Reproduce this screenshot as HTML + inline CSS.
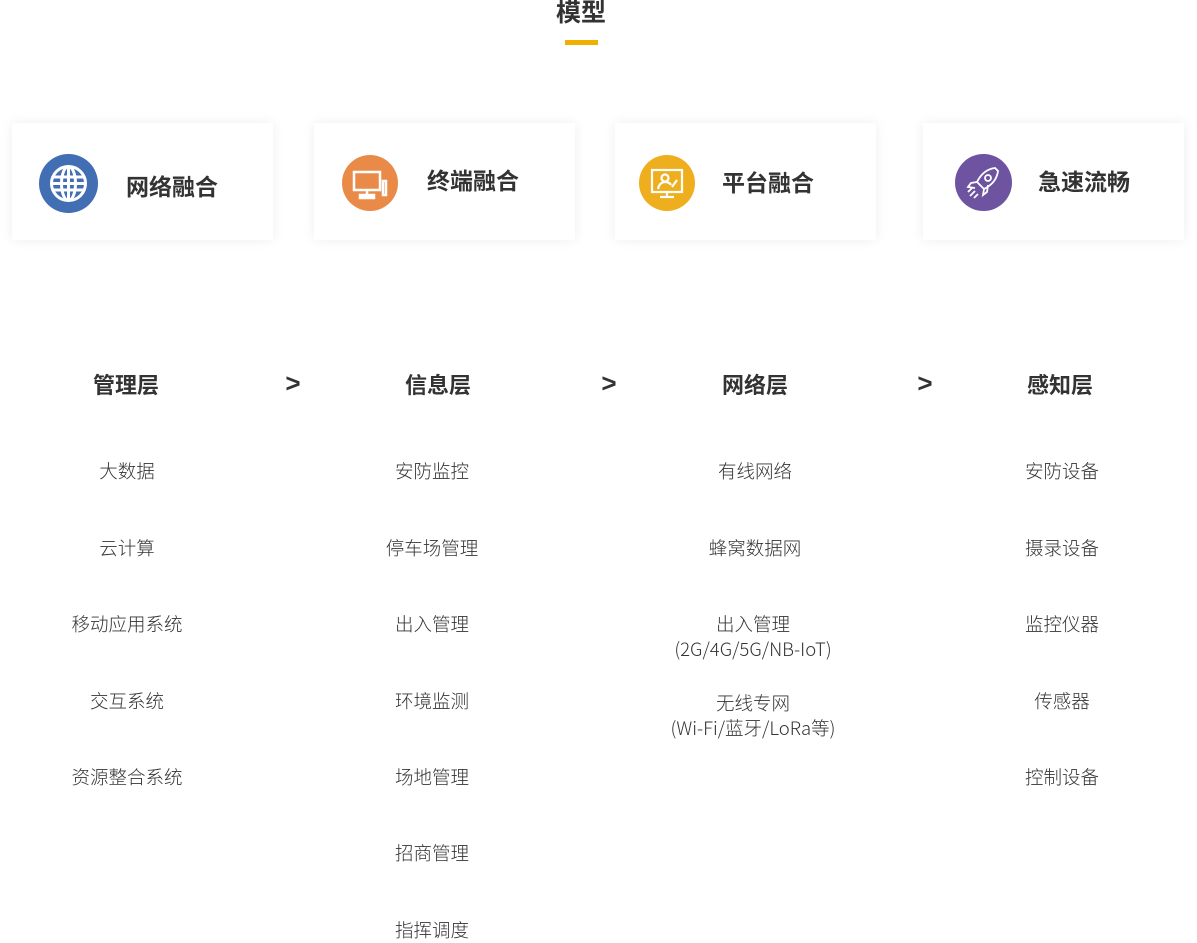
<!DOCTYPE html>
<html><head><meta charset="utf-8"><style>
body{margin:0;width:1197px;height:939px;background:#fff;position:relative;overflow:hidden;font-family:"Liberation Sans","Noto Sans CJK SC",sans-serif;color:#333}
.a{position:absolute;white-space:nowrap}
.c{transform:translateX(-50%);text-align:center}
.card{position:absolute;top:123px;width:261px;height:117px;background:#fff;box-shadow:0 0 12px rgba(0,0,0,.07)}
.ic{position:absolute;border-radius:50%;width:58px;height:58px;top:154px}
.ic svg{position:absolute;left:0;top:0}
.ct{position:absolute;top:164px;font-size:23px;font-weight:bold;color:#333}
.h{font-size:22px;font-weight:bold;top:368px;color:#333}
.g{font-size:26px;font-weight:bold;top:368px;color:#333}
.i{font-size:18.5px;color:#333;line-height:25px;font-family:"Noto Sans CJK SC",sans-serif;font-weight:300}
</style></head><body>
<div class="a c" style="left:581px;top:-7px;font-size:25px;font-weight:bold">模型</div>
<div class="a" style="left:565px;top:40px;width:33px;height:5px;background:#f0b000"></div>

<div class="card" style="left:12px"></div>
<div class="card" style="left:314px"></div>
<div class="card" style="left:615px"></div>
<div class="card" style="left:923px"></div>

<div class="ic" style="left:39px;background:#426eb4;width:59px;height:59px">
<svg width="59" height="59" viewBox="0 0 59 59" fill="none" stroke="#fff" stroke-width="3"><circle cx="29.5" cy="29.5" r="17"/><ellipse cx="29.5" cy="29.5" rx="7" ry="17"/><line x1="29.5" y1="12" x2="29.5" y2="47"/><line x1="13" y1="23" x2="46" y2="23"/><line x1="13" y1="36" x2="46" y2="36"/><line x1="12" y1="29.5" x2="47" y2="29.5"/></svg></div>
<div class="ct" style="left:126px;top:168px">网络融合</div>

<div class="ic" style="left:342px;background:#ea8a48;width:56px;height:56px;top:155px">
<svg width="56" height="56" viewBox="0 0 56 56" fill="none" stroke="#fff" stroke-width="2.5"><rect x="12" y="17" width="26" height="18"/><line x1="25" y1="35" x2="25" y2="40"/><rect x="18" y="40" width="14" height="3" fill="#fff"/><rect x="41" y="26" width="3" height="14"/></svg></div>
<div class="ct" style="left:427px;top:162px">终端融合</div>

<div class="ic" style="left:639px;background:#efae1e;width:56px;height:56px;top:155px">
<svg width="56" height="56" viewBox="0 0 56 56" fill="none" stroke="#fff" stroke-width="2.2"><rect x="13" y="15" width="30" height="22"/><circle cx="26" cy="23" r="3.5"/><path d="M19 34c1-5 4-7 7-7s5 1 6 3"/><path d="M33 32l5-7"/><line x1="28" y1="37" x2="28" y2="42"/><line x1="21" y1="42" x2="35" y2="42"/></svg></div>
<div class="ct" style="left:722px;top:164px">平台融合</div>

<div class="ic" style="left:955px;background:#6d53a0;width:57px;height:57px">
<svg width="57" height="57" viewBox="0 0 57 57" fill="none" stroke="#fff" stroke-width="1.8"><path d="M40 14c-8 1-14 6-18 14l7 7c8-4 13-10 14-18z"/><circle cx="33" cy="24" r="3"/><path d="M22 28l-6 1-3 4 7 1"/><path d="M29 35l-1 6 4-3 1-7"/><path d="M20 37l-5 5M23 40l-4 4M17 34l-4 4"/></svg></div>
<div class="ct" style="left:1038px;top:163px">急速流畅</div>

<div class="a c h" style="left:126px">管理层</div>
<div class="a c h" style="left:438px">信息层</div>
<div class="a c h" style="left:755px">网络层</div>
<div class="a c h" style="left:1060px">感知层</div>
<div class="a c g" style="left:293px">&gt;</div>
<div class="a c g" style="left:609px">&gt;</div>
<div class="a c g" style="left:925px">&gt;</div>

<div class="a c i" style="left:127px;top:459px">大数据</div>
<div class="a c i" style="left:127px;top:536px">云计算</div>
<div class="a c i" style="left:127px;top:612px">移动应用系统</div>
<div class="a c i" style="left:127px;top:689px">交互系统</div>
<div class="a c i" style="left:127px;top:765px">资源整合系统</div>

<div class="a c i" style="left:432px;top:459px">安防监控</div>
<div class="a c i" style="left:432px;top:536px">停车场管理</div>
<div class="a c i" style="left:432px;top:612px">出入管理</div>
<div class="a c i" style="left:432px;top:689px">环境监测</div>
<div class="a c i" style="left:432px;top:765px">场地管理</div>
<div class="a c i" style="left:432px;top:841px">招商管理</div>
<div class="a c i" style="left:432px;top:918px">指挥调度</div>

<div class="a c i" style="left:755px;top:459px">有线网络</div>
<div class="a c i" style="left:755px;top:536px">蜂窝数据网</div>
<div class="a c i" style="left:753px;top:612px">出入管理<br>(2G/4G/5G/NB-IoT)</div>
<div class="a c i" style="left:753px;top:691px">无线专网<br>(Wi-Fi/蓝牙/LoRa等)</div>

<div class="a c i" style="left:1062px;top:459px">安防设备</div>
<div class="a c i" style="left:1062px;top:536px">摄录设备</div>
<div class="a c i" style="left:1062px;top:612px">监控仪器</div>
<div class="a c i" style="left:1062px;top:689px">传感器</div>
<div class="a c i" style="left:1062px;top:765px">控制设备</div>
</body></html>
